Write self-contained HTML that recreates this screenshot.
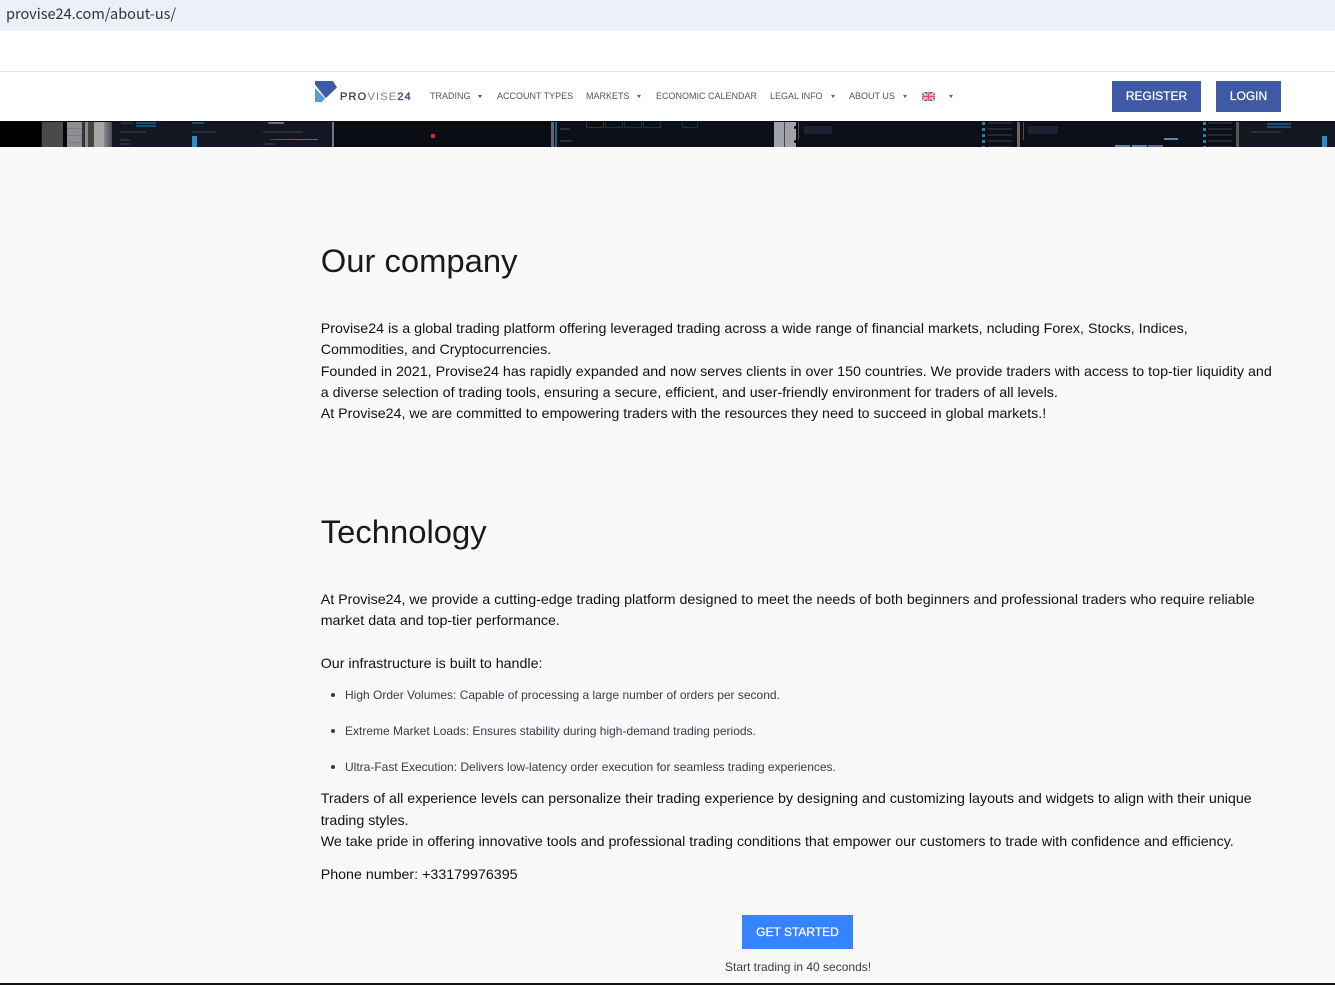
<!DOCTYPE html>
<html lang="en"><head><meta charset="utf-8"><title>Provise24 - About us</title>
<style>
html,body{margin:0;padding:0;background:#f9f9f9}
body{position:relative;width:1335px;height:985px;overflow:hidden;font-family:"Liberation Sans",sans-serif}
.a{position:absolute;white-space:nowrap}
.t{position:absolute;white-space:nowrap;left:320.700px;font-size:14.250px;line-height:20px;color:#111;height:20px}
.l{position:absolute;white-space:nowrap;left:345px;font-size:12px;line-height:16px;color:#3a3a4a;height:16px}
.d{position:absolute;left:331px;width:4px;height:4px;border-radius:50%;background:#3a3a4a}
.n{position:absolute;white-space:nowrap;top:89px;font-size:9px;line-height:14px;color:#555}
.c{position:absolute;top:95px;width:0;height:0;border-left:2px solid transparent;border-right:2px solid transparent;border-top:3px solid #555}
.h{position:absolute;white-space:nowrap;left:320.700px;color:#1a1a1a;font-weight:400;font-size:32.800px}
.b{position:absolute;color:#fff;text-align:center;font-size:12px;font-weight:400;-webkit-text-stroke:.25px #fff}
.s{position:absolute;top:122px;height:25px}
.u{position:absolute;height:2px;background:#2a2e3b}
</style></head><body>
<div class="a" style="left:0;top:0;width:1335px;height:31px;background:#ebf0f9"></div>
<div class="a" style="left:6px;top:3px;font-family:'Noto Sans CJK SC',sans-serif;font-size:14.500px;line-height:22px;color:#333">provise24.com/about-us/</div>
<div class="a" style="left:0;top:31px;width:1335px;height:90px;background:#fff"></div>
<div class="a" style="left:0;top:71px;width:1335px;height:1px;background:#e4e4e4"></div>

<svg class="a" style="left:314px;top:80px" width="24" height="23" viewBox="0 0 24 23"><path d="M1 1H19L23 7.500L13 17L11.500 18L1 4.500Z" fill="#3f5aa6"/><path d="M1 8L11 18.500L8 22H1Z" fill="#5b9bd5"/></svg>
<div class="a" style="left:340px;top:90px;font-size:11px;line-height:14px;color:#3d4a6b;letter-spacing:1.200px"><span style="color:#2f3d66;-webkit-text-stroke:.3px #2f3d66">PRO</span><span style="color:#7a839c">VISE</span><span style="color:#2f3d66;-webkit-text-stroke:.3px #2f3d66">24</span></div>

<div class="n" style="left:430px">TRADING</div><div class="c" style="left:478px"></div>
<div class="n" style="left:497px">ACCOUNT TYPES</div>
<div class="n" style="left:586px">MARKETS</div><div class="c" style="left:637px"></div>
<div class="n" style="left:656px">ECONOMIC CALENDAR</div>
<div class="n" style="left:770px">LEGAL INFO</div><div class="c" style="left:831px"></div>
<div class="n" style="left:849px">ABOUT US</div><div class="c" style="left:903px"></div>
<svg class="a" style="left:922px;top:92px" width="13" height="9" viewBox="0 0 13 9"><rect width="13" height="9" fill="#3c5ca8"/><path d="M0 0L13 9M13 0L0 9" stroke="#f6c6cf" stroke-width="2"/><path d="M6.500 0V9M0 4.500H13" stroke="#f6c6cf" stroke-width="3"/><path d="M6.500 0V9M0 4.500H13" stroke="#ea4a63" stroke-width="1.600"/></svg>
<div class="c" style="left:949px"></div>

<div class="b" style="left:1112px;top:81px;width:89px;height:31px;line-height:30px;background:#4059a5">REGISTER</div>
<div class="b" style="left:1216px;top:81px;width:65px;height:31px;line-height:30px;background:#4059a5">LOGIN</div>

<!-- dark banner strip -->
<div class="a" style="left:0;top:121px;width:1335px;height:26px;background:#0d0f18"></div>
<div class="s" style="left:112px;width:220px;background:#131722"></div>
<div class="s" style="left:1239px;width:96px;background:#131722"></div>
<div class="s" style="left:334px;width:217px;background:#0a0c14"></div>
<div class="s" style="left:0;width:41px;background:#000"></div>
<div class="s" style="left:42px;width:21px;background:#4a4a4a"></div>
<div class="s" style="left:63px;width:4px;background:#050505"></div>
<div class="s" style="left:67px;width:15px;background:repeating-linear-gradient(#8d8d95 0 6px,#7c7c84 6px 7px)"></div>
<div class="s" style="left:82px;width:3px;background:#333"></div>
<div class="s" style="left:85px;width:3px;background:#8a8a8a"></div>
<div class="s" style="left:88px;width:6px;background:#444"></div>
<div class="s" style="left:94px;width:10px;background:#a5a5a5"></div>
<div class="s" style="left:104px;width:8px;background:linear-gradient(90deg,#8a8a8f,#4b4b55)"></div>
<div class="u" style="left:121px;top:122px;width:12px"></div>
<div class="u" style="left:136px;top:122px;width:20px;background:#1a4f73"></div>
<div class="u" style="left:136px;top:125px;width:20px;background:#1a4f73"></div>
<div class="u" style="left:120px;top:131px;width:26px"></div>
<div class="u" style="left:120px;top:139px;width:10px"></div>
<div class="u" style="left:120px;top:143px;width:10px"></div>
<div class="u" style="left:192px;top:131px;width:24px"></div>
<div class="s" style="left:192px;top:136px;width:5px;height:11px;background:#2b8cc4"></div>
<div class="u" style="left:192px;top:122px;width:12px;background:#1a4f73"></div>
<div class="s" style="left:268px;top:122px;width:16px;height:2px;background:linear-gradient(90deg,#7a4f6a,#5d8a6d,#6a5fa0)"></div>
<div class="u" style="left:263px;top:131px;width:40px"></div>
<div class="s" style="left:270px;top:139px;width:48px;height:1px;background:linear-gradient(90deg,#7a3036,#3f6f8f,#7f6a30)"></div>
<div class="u" style="left:263px;top:143px;width:12px"></div>
<div class="s" style="left:332px;width:2px;background:#777"></div>
<div class="s" style="left:431px;top:134px;width:4px;height:4px;background:#d6253a"></div>
<div class="s" style="left:551px;width:3px;background:#666"></div>
<div class="s" style="left:555px;width:2px;background:#285f92"></div>
<div class="u" style="left:560px;top:128px;width:10px"></div>
<div class="u" style="left:560px;top:140px;width:12px"></div>
<div class="s" style="left:586px;top:122px;width:16px;height:5px;border:1px solid #3d3420;border-top:0"></div>
<div class="s" style="left:605px;top:122px;width:16px;height:5px;border:1px solid #1a3347;border-top:0"></div>
<div class="s" style="left:624px;top:122px;width:16px;height:5px;border:1px solid #1a3347;border-top:0"></div>
<div class="s" style="left:643px;top:122px;width:16px;height:5px;border:1px solid #1a3347;border-top:0"></div>
<div class="s" style="left:682px;top:122px;width:14px;height:5px;border:1px solid #1a3347;border-top:0"></div>
<div class="s" style="left:774px;width:22px;background:#a2a2ac"></div>
<div class="s" style="left:784px;width:1px;background:#444"></div>
<div class="s" style="left:794px;top:126px;width:3px;height:3px;background:#000;border-radius:50%"></div>
<div class="s" style="left:794px;top:140px;width:3px;height:3px;background:#000;border-radius:50%"></div>
<div class="s" style="left:798px;width:1px;height:18px;background:#6a4a1e"></div>
<div class="s" style="left:804px;top:126px;width:28px;height:8px;background:#1d2030"></div>
<div class="s" style="left:982px;top:122px;width:3px;height:25px;background:repeating-linear-gradient(#2f7aa8 0 3px,transparent 3px 6px)"></div>
<div class="s" style="left:988px;top:122px;width:24px;height:25px;background:repeating-linear-gradient(#242835 0 2px,transparent 2px 6px)"></div>
<div class="s" style="left:1017px;width:3px;background:#6a6a6a"></div>
<div class="s" style="left:1023px;width:1px;height:18px;background:#6a4a1e"></div>
<div class="s" style="left:1028px;top:126px;width:30px;height:8px;background:#1d2030"></div>
<div class="s" style="left:1115px;top:145px;width:15px;height:2px;background:#4f89b8"></div>
<div class="s" style="left:1132px;top:145px;width:15px;height:2px;background:#4f89b8"></div>
<div class="s" style="left:1148px;top:145px;width:15px;height:2px;background:#6d5aa6"></div>
<div class="s" style="left:1164px;top:138px;width:14px;height:2px;background:#4f89b8"></div>
<div class="s" style="left:1203px;top:122px;width:3px;height:25px;background:repeating-linear-gradient(#2f7aa8 0 3px,transparent 3px 6px)"></div>
<div class="s" style="left:1208px;top:122px;width:24px;height:25px;background:repeating-linear-gradient(#242835 0 2px,transparent 2px 6px)"></div>
<div class="s" style="left:1236px;width:3px;background:#555"></div>
<div class="u" style="left:1267px;top:123px;width:24px;background:#1a4f73"></div>
<div class="u" style="left:1267px;top:126px;width:24px;background:#1a4f73"></div>
<div class="u" style="left:1251px;top:131px;width:30px"></div>
<div class="s" style="left:1322px;top:136px;width:5px;height:11px;background:#2b8cc4"></div>

<div class="h" style="top:240px;line-height:42px">Our company</div>
<div class="t" style="top:319px">Provise24 is a global trading platform offering leveraged trading across a wide range of financial markets, ncluding Forex, Stocks, Indices,</div>
<div class="t" style="top:340px">Commodities, and Cryptocurrencies.</div>
<div class="t" style="top:362px">Founded in 2021, Provise24 has rapidly expanded and now serves clients in over 150 countries. We provide traders with access to top-tier liquidity and</div>
<div class="t" style="top:383px">a diverse selection of trading tools, ensuring a secure, efficient, and user-friendly environment for traders of all levels.</div>
<div class="t" style="top:404px">At Provise24, we are committed to empowering traders with the resources they need to succeed in global markets.!</div>

<div class="h" style="top:511px;line-height:42px">Technology</div>
<div class="t" style="top:590px">At Provise24, we provide a cutting-edge trading platform designed to meet the needs of both beginners and professional traders who require reliable</div>
<div class="t" style="top:611px">market data and top-tier performance.</div>
<div class="t" style="top:654px">Our infrastructure is built to handle:</div>

<div class="d" style="top:693px"></div><div class="l" style="top:687px">High Order Volumes: Capable of processing a large number of orders per second.</div>
<div class="d" style="top:729px"></div><div class="l" style="top:723px">Extreme Market Loads: Ensures stability during high-demand trading periods.</div>
<div class="d" style="top:765px"></div><div class="l" style="top:759px">Ultra-Fast Execution: Delivers low-latency order execution for seamless trading experiences.</div>

<div class="t" style="top:789px">Traders of all experience levels can personalize their trading experience by designing and customizing layouts and widgets to align with their unique</div>
<div class="t" style="top:811px">trading styles.</div>
<div class="t" style="top:832px">We take pride in offering innovative tools and professional trading conditions that empower our customers to trade with confidence and efficiency.</div>
<div class="t" style="top:865px">Phone number: +33179976395</div>

<div class="b" style="left:742px;top:915px;width:111px;height:34px;line-height:34px;background:#3683ff">GET STARTED</div>
<div class="a" style="left:725px;top:959px;font-size:12px;line-height:16px;color:#3a3a4a">Start trading in 40 seconds!</div>
<div class="a" style="left:0;top:983px;width:1335px;height:2px;background:#111"></div>
</body></html>
